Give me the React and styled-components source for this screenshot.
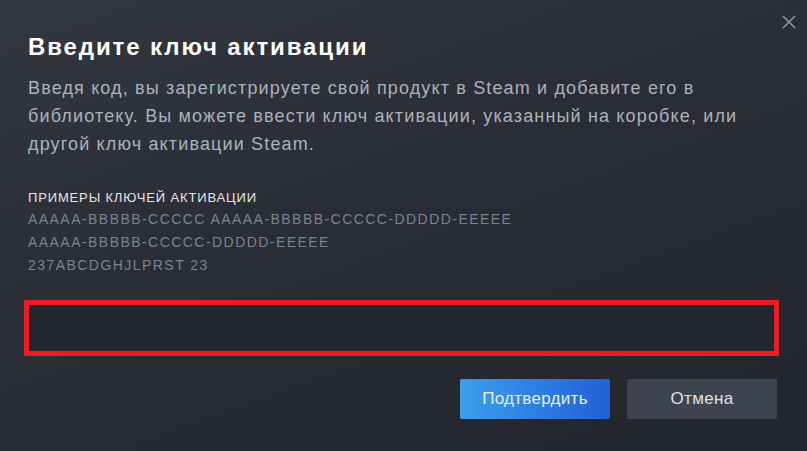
import React from "react";
import styled, { createGlobalStyle } from "styled-components";

const Global = createGlobalStyle`
  html, body { margin: 0; padding: 0; background: #23262d; }
  body { font-family: "Liberation Sans", Arial, sans-serif; }
  * { box-sizing: border-box; }
`;

const Dialog = styled.div`
  position: relative;
  width: 807px;
  height: 451px;
  padding: 32px 28px 32px 28px;
  display: flex;
  flex-direction: column;
  background: linear-gradient(160deg, #33373f 0%, #2b2e36 40%, #25282f 75%, #23262d 100%);
  overflow: hidden;
`;

const CloseButton = styled.button`
  position: absolute;
  top: 13px;
  right: 10px;
  width: 17px;
  height: 17px;
  padding: 0;
  border: 0;
  background: transparent;
  display: flex;
  align-items: center;
  justify-content: center;
  cursor: pointer;
`;

const Title = styled.h1`
  margin: 0;
  font-size: 24px;
  line-height: 30px;
  font-weight: 700;
  letter-spacing: 1.9px;
  color: #ffffff;
`;

const Description = styled.p`
  margin: 12px 0 0 0;
  font-size: 18px;
  line-height: 28px;
  letter-spacing: 1.15px;
  color: #acb2b8;
  max-width: 752px;
`;

const ExamplesHeading = styled.div`
  margin-top: 31px;
  font-size: 13px;
  line-height: 18px;
  letter-spacing: 0.85px;
  color: #e4e6e8;
  text-transform: uppercase;
`;

const KeyLine = styled.div`
  font-size: 14px;
  line-height: 23px;
  letter-spacing: 1.45px;
  color: #7b838d;
`;

const KeyList = styled.div`
  margin-top: 1px;
  display: flex;
  flex-direction: column;
`;

const KeyInput = styled.input`
  margin: 23px 0 0 -4px;
  width: 755px;
  height: 56px;
  border: 5px solid #ec1c24;
  background: #23262e;
  color: #dcdedf;
  font-family: inherit;
  font-size: 16px;
  padding: 0 12px;
  outline: none;
`;

const Actions = styled.div`
  margin-top: 23px;
  display: flex;
  justify-content: flex-end;
  gap: 17px;
  padding-right: 2px;
`;

const Button = styled.button`
  width: 150px;
  height: 40px;
  border: 0;
  border-radius: 2px;
  font-family: inherit;
  font-size: 17px;
  letter-spacing: 0.3px;
  cursor: pointer;
  color: ${(p) => (p.$primary ? "#e8f0f8" : "#dfe3e6")};
  background: ${(p) =>
    p.$primary
      ? "linear-gradient(to right, #3d9fec 0%, #2e7fe2 50%, #2360d6 100%)"
      : "#3d4450"};
`;

export default function App() {
  return (
    <>
      <Global />
      <Dialog>
        <CloseButton aria-label="Закрыть">
          <svg width="14" height="14" viewBox="0 0 14 14">
            <path d="M1 1 L13 13 M13 1 L1 13" stroke="#8a969e" strokeWidth="1.6" fill="none" />
          </svg>
        </CloseButton>
        <Title>Введите ключ активации</Title>
        <Description>
          Введя код, вы зарегистрируете свой продукт в Steam и добавите его в
          библиотеку. Вы можете ввести ключ активации, указанный на коробке, или
          другой ключ активации Steam.
        </Description>
        <ExamplesHeading>Примеры ключей активации</ExamplesHeading>
        <KeyList>
          <KeyLine>AAAAA-BBBBB-CCCCC AAAAA-BBBBB-CCCCC-DDDDD-EEEEE</KeyLine>
          <KeyLine>AAAAA-BBBBB-CCCCC-DDDDD-EEEEE</KeyLine>
          <KeyLine>237ABCDGHJLPRST 23</KeyLine>
        </KeyList>
        <KeyInput type="text" />
        <Actions>
          <Button $primary>Подтвердить</Button>
          <Button>Отмена</Button>
        </Actions>
      </Dialog>
    </>
  );
}
